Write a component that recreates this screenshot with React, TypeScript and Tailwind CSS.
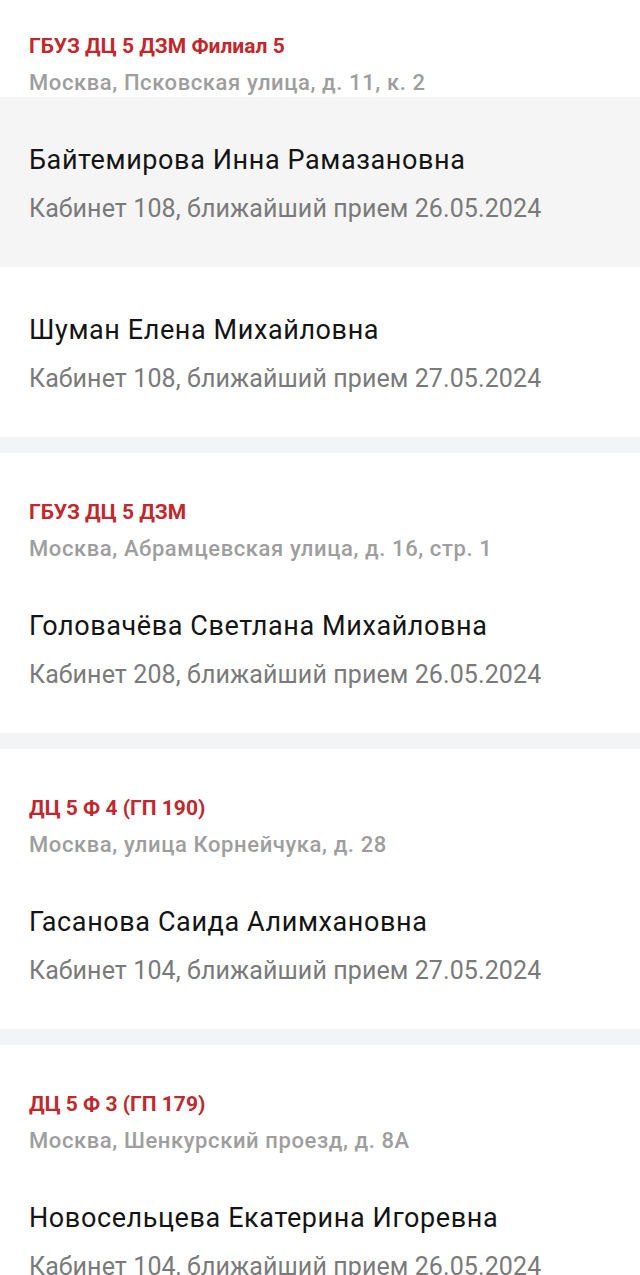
import React from "react";

type Doctor = { name: string; info: string };
type Clinic = { title: string; address: string; doctors: Doctor[] };

const clinics: Clinic[] = [
  {
    title: "ГБУЗ ДЦ 5 ДЗМ Филиал 5",
    address: "Москва, Псковская улица, д. 11, к. 2",
    doctors: [
      { name: "Байтемирова Инна Рамазановна", info: "Кабинет 108, ближайший прием 26.05.2024" },
      { name: "Шуман Елена Михайловна", info: "Кабинет 108, ближайший прием 27.05.2024" },
    ],
  },
  {
    title: "ГБУЗ ДЦ 5 ДЗМ",
    address: "Москва, Абрамцевская улица, д. 16, стр. 1",
    doctors: [{ name: "Головачёва Светлана Михайловна", info: "Кабинет 208, ближайший прием 26.05.2024" }],
  },
  {
    title: "ДЦ 5 Ф 4 (ГП 190)",
    address: "Москва, улица Корнейчука, д. 28",
    doctors: [{ name: "Гасанова Саида Алимхановна", info: "Кабинет 104, ближайший прием 27.05.2024" }],
  },
  {
    title: "ДЦ 5 Ф 3 (ГП 179)",
    address: "Москва, Шенкурский проезд, д. 8А",
    doctors: [{ name: "Новосельцева Екатерина Игоревна", info: "Кабинет 104, ближайший прием 26.05.2024" }],
  },
];

export default function App() {
  return (
    <div className="h-[1275px] overflow-hidden bg-white" style={{ fontFamily: "Roboto, 'Noto Sans', sans-serif" }}>
      <div className="-mt-[13px] flex flex-col">
        {clinics.map((c, i) => (
          <div key={i} className="flex flex-col">
            {i > 0 && <div className="h-[16px] bg-[#f3f4f6]" />}
            <div className="flex flex-col px-[29px] pt-[47px] pb-[1px]">
              <div className="text-[21px] leading-[24px] font-bold text-[#c0282d] whitespace-nowrap">{c.title}</div>
              <div className="mt-[12px] text-[22px] leading-[26px] font-medium tracking-[0.6px] text-[#9e9e9e] whitespace-nowrap">
                {c.address}
              </div>
            </div>
            {c.doctors.map((d, j) => (
              <div
                key={j}
                className={`flex flex-col px-[29px] pt-[47px] pb-[43px] ${i === 0 && j === 0 ? "bg-[#f5f5f5]" : "bg-white"}`}
              >
                <div className="text-[27px] leading-[32px] tracking-[0.6px] text-[#141414] whitespace-nowrap">{d.name}</div>
                <div className="mt-[18px] text-[25px] leading-[30px] tracking-[0.1px] text-[#7a7a7a] whitespace-nowrap">
                  {d.info}
                </div>
              </div>
            ))}
          </div>
        ))}
      </div>
    </div>
  );
}
